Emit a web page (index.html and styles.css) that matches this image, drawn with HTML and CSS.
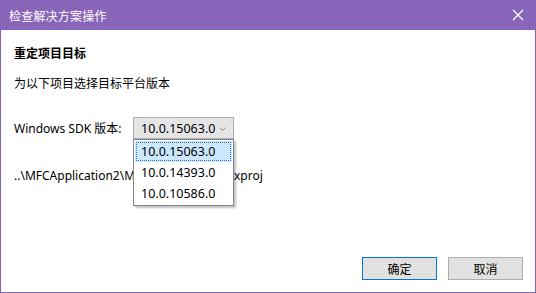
FILE: index.html
```html
<!DOCTYPE html>
<html lang="zh-CN">
<head>
<meta charset="utf-8">
<title>检查解决方案操作</title>
<link rel="stylesheet" href="styles.css">
</head>
<body>
<div class="window">
  <div class="titlebar">
    <span class="title">检查解决方案操作</span>
    <span class="close">
      <svg width="12" height="12" viewBox="0 0 12 12"><path d="M1 1 L11 11 M11 1 L1 11" stroke="#fff" stroke-width="1.3" fill="none"/></svg>
    </span>
  </div>
  <div class="content">
    <div class="heading">重定项目目标</div>
    <div class="desc">为以下项目选择目标平台版本</div>
    <div class="sdk-row">
      <span class="label">Windows SDK 版本:</span>
      <div class="combo-wrap">
        <div class="combo">
          <span class="combo-text">10.0.15063.0</span>
          <svg class="chev" width="7" height="4" viewBox="0 0 7 4"><path d="M0.5 0.5 L3.5 3.5 L6.5 0.5" stroke="#8a8a8a" stroke-width="1" fill="none"/></svg>
        </div>
        <ul class="dropdown">
          <li class="item selected">10.0.15063.0</li>
          <li class="item">10.0.14393.0</li>
          <li class="item">10.0.10586.0</li>
        </ul>
      </div>
    </div>
    <div class="path">..\MFCApplication2\MFCApplication2.vcxproj</div>
    <div class="buttons">
      <button class="btn primary">确定</button>
      <button class="btn">取消</button>
    </div>
  </div>
</div>
</body>
</html>
```
FILE: styles.css
```css
html, body {
  margin: 0;
  padding: 0;
  background: #ffffff;
}
body {
  font-family: "Noto Sans", "Noto Sans CJK SC", sans-serif;
  font-size: 12px;
  color: #000;
}
.window {
  width: 536px;
  height: 293px;
  box-sizing: border-box;
  border: 1px solid #8462b4;
  border-top: none;
  background: #fff;
  display: flex;
  flex-direction: column;
}
.titlebar {
  height: 30px;
  background: #8965b9;
  color: #fff;
  display: flex;
  align-items: center;
  justify-content: space-between;
  padding-left: 8px;
  padding-right: 11px;
  flex: none;
  font-size: 12px;
}
.title {
  font-family: "Noto Sans CJK SC", sans-serif;
  letter-spacing: 0.2px;
}
.close {
  display: flex;
  align-items: center;
}
.content {
  flex: 1;
  display: flex;
  flex-direction: column;
  padding: 14px 12px 12px 13px;
}
.heading {
  font-family: "Noto Sans CJK SC", sans-serif;
  font-weight: bold;
  line-height: 17px;
  height: 17px;
}
.desc {
  font-family: "Noto Sans CJK SC", sans-serif;
  line-height: 17px;
  margin-top: 13px;
}
.sdk-row {
  display: flex;
  align-items: center;
  margin-top: 26px;
  height: 22px;
}
.label {
  width: 119px;
}
.combo-wrap {
  position: relative;
}
.combo {
  width: 101px;
  height: 22px;
  box-sizing: border-box;
  border: 1px solid #adadad;
  background: #e5e5e5;
  display: flex;
  align-items: center;
  justify-content: space-between;
  padding: 0 7px 0 7px;
  font-size: 12.5px;
}
.chev {
  margin-top: 1px;
}
.dropdown {
  position: absolute;
  left: 0;
  top: 22px;
  width: 101px;
  box-sizing: border-box;
  margin: 0;
  padding: 1px;
  list-style: none;
  background: #fff;
  border: 1px solid #828790;
  box-shadow: 2px 2px 2px rgba(0,0,0,0.25);
  z-index: 2;
  font-size: 12.5px;
}
.item {
  height: 21px;
  line-height: 21px;
  padding-left: 6px;
  box-sizing: border-box;
}
.item.selected {
  background: #cce8ff;
  outline: 1px dotted #3c6ea8;
  outline-offset: -2px;
}
.path {
  margin-top: 28px;
  line-height: 17px;
}
.buttons {
  margin-top: auto;
  display: flex;
  justify-content: flex-end;
  gap: 11px;
}
.btn {
  width: 75px;
  height: 23px;
  box-sizing: border-box;
  border: 1px solid #adadad;
  background: #e1e1e1;
  font-family: "Noto Sans CJK SC", sans-serif;
  font-size: 12px;
  color: #000;
  padding: 0;
}
.btn.primary {
  border-color: #0078d7;
}
```
